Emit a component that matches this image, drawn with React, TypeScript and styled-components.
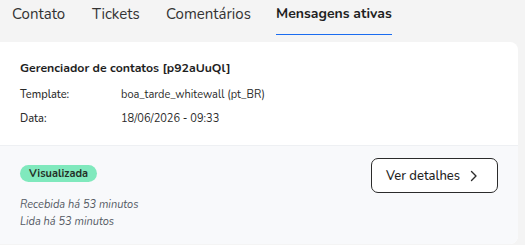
import React from "react";
import styled, { createGlobalStyle } from "styled-components";

const Global = createGlobalStyle`
  html, body { margin: 0; padding: 0; background: #f4f4f4; }
  body { font-family: "Nunito", "Lato", "Noto Sans", sans-serif; color: #222; }
`;

const Page = styled.div`
  width: 525px;
  height: 245px;
  overflow: hidden;
  background: #f4f4f4;
`;

const Tabs = styled.nav`
  display: flex;
  height: 42px;
  padding-left: 12px;
`;

const Tab = styled.div<{ $active?: boolean; $w: number }>`
  width: ${(p) => p.$w}px;
  flex: none;
  font-size: ${(p) => (p.$active ? 14 : 15)}px;
  line-height: 20px;
  padding-top: 4px;
  color: ${(p) => (p.$active ? "#1f1f1f" : "#333")};
  font-weight: ${(p) => (p.$active ? 700 : 400)};
  white-space: nowrap;
  & > span {
    display: inline-block;
    height: 31px;
    box-sizing: border-box;
    border-bottom: ${(p) => (p.$active ? "1.5px solid #1a6cf0" : "none")};
  }
`;

const Card = styled.section`
  margin-left: -8px;
  width: 526px;
  height: 202px;
  background: #fff;
  border-radius: 8px;
  overflow: hidden;
  display: flex;
  flex-direction: column;
`;

const Body = styled.div`
  height: 104px;
  box-sizing: border-box;
  padding: 17px 0 0 28px;
  border-bottom: 1px solid #eef0f3;
`;

const Title = styled.h2`
  margin: 0 0 11px;
  font-size: 12.3px;
  line-height: 18px;
  font-weight: 700;
  color: #1e1e1e;
`;

const InfoRow = styled.div`
  display: grid;
  grid-template-columns: 101px 1fr;
  font-size: 11px;
  line-height: 14px;
  color: #2a2a2a;
  margin-bottom: 10px;
`;

const Label = styled.span`
  font-weight: 500;
`;

const Footer = styled.div`
  flex: 1;
  background: #f8f9fb;
  display: flex;
  justify-content: space-between;
  padding: 12px 20px 0 28px;
`;

const Status = styled.div`
  display: flex;
  flex-direction: column;
  align-items: flex-start;
`;

const Badge = styled.span`
  margin-top: 7px;
  display: inline-flex;
  align-items: center;
  justify-content: center;
  height: 17px;
  width: 77px;
  border-radius: 9px;
  background: #80e9bd;
  color: #243027;
  font-size: 11px;
  font-weight: 700;
`;

const Meta = styled.div`
  margin-top: 14px;
  font-size: 11px;
  line-height: 17px;
  font-style: italic;
  color: #555a64;
`;

const Button = styled.button`
  display: flex;
  align-items: center;
  gap: 10px;
  width: 127px;
  height: 35px;
  box-sizing: border-box;
  padding: 0 0 0 14px;
  border: 1px solid #2b2b2b;
  border-radius: 7px;
  background: #fff;
  font-family: inherit;
  font-size: 13px;
  font-weight: 500;
  color: #1e1e1e;
  cursor: pointer;
`;

export default function App() {
  return (
    <Page>
      <Global />
      <Tabs>
        <Tab $w={80}><span>Contato</span></Tab>
        <Tab $w={74}><span>Tickets</span></Tab>
        <Tab $w={110}><span>Comentários</span></Tab>
        <Tab $w={130} $active><span>Mensagens ativas</span></Tab>
      </Tabs>
      <Card>
        <Body>
          <Title>Gerenciador de contatos [p92aUuQl]</Title>
          <InfoRow>
            <Label>Template:</Label>
            <span>boa_tarde_whitewall (pt_BR)</span>
          </InfoRow>
          <InfoRow>
            <Label>Data:</Label>
            <span>18/06/2026 - 09:33</span>
          </InfoRow>
        </Body>
        <Footer>
          <Status>
            <Badge>Visualizada</Badge>
            <Meta>
              Recebida há 53 minutos
              <br />
              Lida há 53 minutos
            </Meta>
          </Status>
          <Button>
            Ver detalhes
            <svg width="8" height="12" viewBox="0 0 8 12" fill="none">
              <path d="M1.5 1.5L6 6L1.5 10.5" stroke="#2b2b2b" strokeWidth="1.4" strokeLinecap="round" strokeLinejoin="round" />
            </svg>
          </Button>
        </Footer>
      </Card>
    </Page>
  );
}
